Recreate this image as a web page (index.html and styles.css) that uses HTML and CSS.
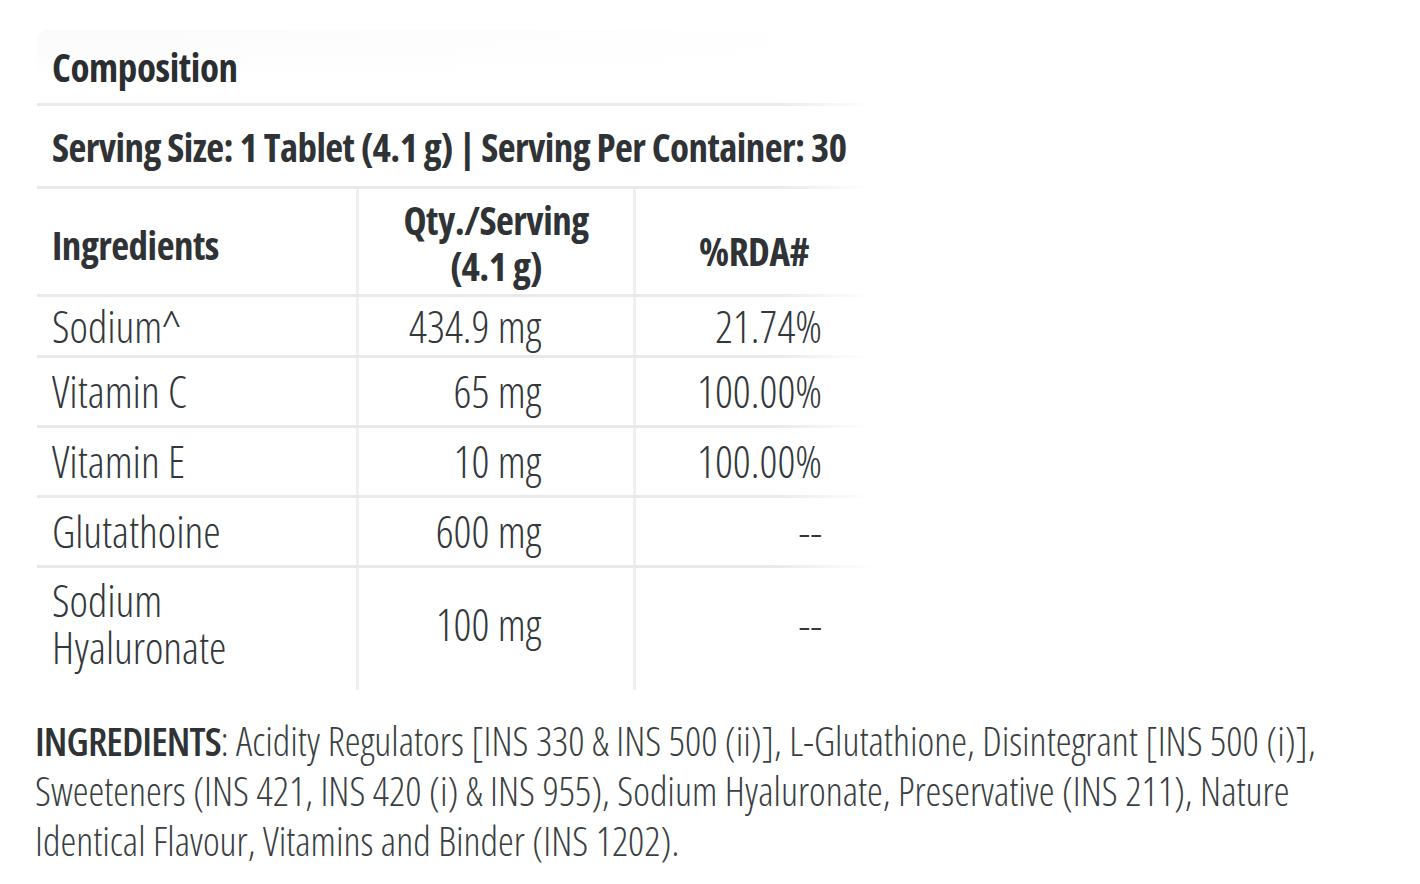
FILE: index.html
```html
<!DOCTYPE html>
<html lang="en">
<head>
<meta charset="utf-8">
<title>Composition</title>
<link rel="stylesheet" href="styles.css">
</head>
<body>
<div class="card">
  <div class="title">Composition</div>
  <div class="serving">Serving Size: 1 Tablet (4.1 g) | Serving Per Container: 30</div>
  <div class="table">
    <div class="row head">
      <div class="cell c1">Ingredients</div>
      <div class="cell c2">Qty./Serving<br>(4.1 g)</div>
      <div class="cell c3">%RDA#</div>
    </div>
    <div class="row r-short">
      <div class="cell c1">Sodium^</div>
      <div class="cell c2">434.9 mg</div>
      <div class="cell c3">21.74%</div>
    </div>
    <div class="row">
      <div class="cell c1">Vitamin C</div>
      <div class="cell c2">65 mg</div>
      <div class="cell c3">100.00%</div>
    </div>
    <div class="row">
      <div class="cell c1">Vitamin E</div>
      <div class="cell c2">10 mg</div>
      <div class="cell c3">100.00%</div>
    </div>
    <div class="row">
      <div class="cell c1">Glutathoine</div>
      <div class="cell c2">600 mg</div>
      <div class="cell c3">--</div>
    </div>
    <div class="row r-tall">
      <div class="cell c1">Sodium<br>Hyaluronate</div>
      <div class="cell c2">100 mg</div>
      <div class="cell c3">--</div>
    </div>
  </div>
</div>
<p class="ingredients"><b>INGREDIENTS</b>: Acidity Regulators [INS 330 &amp; INS 500 (ii)], L-Glutathione, Disintegrant [INS 500 (i)], Sweeteners (INS 421, INS 420 (i) &amp; INS 955), Sodium Hyaluronate, Preservative (INS 211), Nature Identical Flavour, Vitamins and Binder (INS 1202).</p>
</body>
</html>
```
FILE: styles.css
```css
html, body {
  margin: 0;
  padding: 0;
  background: #ffffff;
}

body {
  font-family: "Open Sans", "Roboto", sans-serif;
  font-stretch: 75%;
  color: #33383c;
  padding: 30px 0 0 37px;
}

.card {
  width: 835px;
  border-radius: 12px 0 0 0;
  background:
    linear-gradient(to right, rgba(255, 255, 255, 0) 0, #ffffff 100%),
    linear-gradient(to bottom, #fafafa 0, #ffffff 45px);
}

.title,
.serving,
.row {
  box-sizing: border-box;
  border-bottom: 3px solid #e9ebeb;
  border-image: linear-gradient(to right, #e8eaea 0, #e8eaea 88%, rgba(232, 234, 234, 0) 100%) 1;
}

.title {
  height: 76px;
  display: flex;
  align-items: center;
  padding: 0 15px;
  font-size: 39px;
  font-weight: 700;
  letter-spacing: -0.4px;
  color: #2a2e31;
}

.serving {
  height: 83px;
  display: flex;
  align-items: center;
  padding: 0 15px;
  font-size: 39px;
  font-weight: 700;
  letter-spacing: -0.55px;
  color: #2f3336;
  white-space: nowrap;
}

.row {
  display: grid;
  grid-template-columns: 319px 277px 1fr;
  height: 70px;
  font-size: 44px;
  font-weight: 300;
}

.row:last-child {
  border-bottom: none;
  border-image: none;
}

.row.head {
  height: 108px;
  font-weight: 700;
  font-size: 39px;
  letter-spacing: -0.5px;
  color: #2f3336;
}

.row.r-short {
  height: 61px;
}

.row.r-tall {
  height: 122px;
}

.cell {
  display: flex;
  align-items: center;
  line-height: 47px;
}

.c1 {
  padding-left: 15px;
}

.c2 {
  border-left: 3px solid #eef0f0;
  justify-content: flex-end;
  padding-right: 92px;
  text-align: right;
}

.c3 {
  border-left: 3px solid #eef0f0;
  justify-content: flex-end;
  padding-right: 50px;
}

.head .c1 {
  padding-top: 6px;
}

.head .c2 {
  justify-content: center;
  text-align: center;
  padding: 2px 0 0 0;
  line-height: 46px;
}

.head .c3 {
  justify-content: center;
  padding: 18px 0 0 0;
}

.r-tall .cell {
  padding-bottom: 10px;
}

.ingredients {
  margin: 26px 0 0 -2px;
  width: 1300px;
  font-size: 39.9px;
  font-weight: 300;
  line-height: 50px;
  color: #3a3f43;
}

.ingredients b {
  font-weight: 600;
  letter-spacing: -0.9px;
  color: #2f3336;
}
```
